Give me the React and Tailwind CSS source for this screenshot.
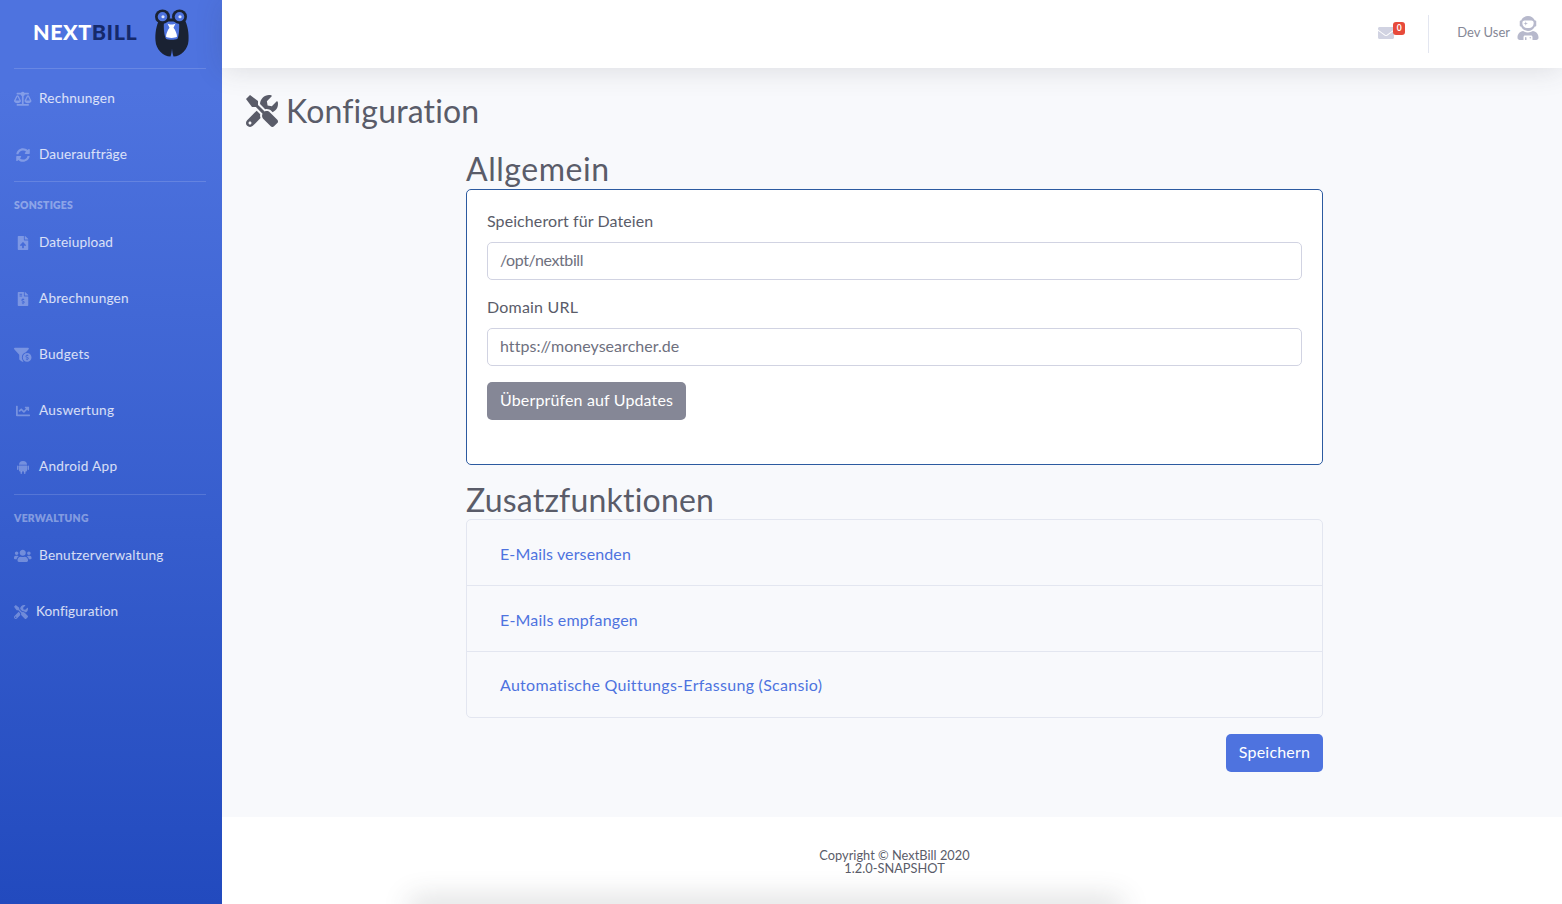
import React from 'react';
import {
  FaBalanceScale,
  FaSyncAlt,
  FaFileUpload,
  FaFileInvoiceDollar,
  FaFunnelDollar,
  FaChartLine,
  FaUsers,
  FaTools,
  FaEnvelope,
  FaUserAstronaut,
} from 'react-icons/fa';

const Logo = () => (
  <svg width="34" height="48" viewBox="0 0 34 50" preserveAspectRatio="none">
    {/* body, two lobes meeting at the bottom */}
    <path d="M5 10 C1 17 0 26 0.500 33 C1 42 8 49 15.500 49.500 C16.500 47 16.800 44 17 41 C17.200 44 17.500 47 18.500 49.500 C26 49 33 42 33.500 33 C34 26 33 17 29 10 Z" fill="#1a2233" />
    {/* belly */}
    <path d="M9 13 L24 13 C24.500 20 24 27 22.500 31 C20 32.500 13 32.500 11 31 C9 27 8.500 20 9 13 Z" fill="#4e73df" />
    {/* money bag */}
    <path d="M12.500 15 C14 16.500 19 16.500 20.500 15 L18.500 19.500 C20.500 22 22 26 22 29 C20.500 30.500 12.500 30.500 11 29 C11 26 12.500 22 14.500 19.500 Z" fill="#ffffff" />
    {/* glasses */}
    <circle cx="7.500" cy="8" r="7.500" fill="#1a2233" />
    <circle cx="24.500" cy="8" r="7.500" fill="#1a2233" />
    <circle cx="7.500" cy="8" r="4.800" fill="#4e73df" />
    <circle cx="24.500" cy="8" r="4.800" fill="#4e73df" />
    <circle cx="8" cy="8" r="1.600" fill="#dfe6fb" />
    <circle cx="25" cy="8" r="1.600" fill="#dfe6fb" />
  </svg>
);

const AndroidIcon = () => (
  <svg width="14" height="14" viewBox="0 0 14 14" fill="currentColor">
    <path d="M3 4.800 a4 3.800 0 0 1 8 0 z" />
    <path d="M3 5.400 h8 v5 a1 1 0 0 1 -1 1 h-6 a1 1 0 0 1 -1 -1 z" />
    <rect x="1" y="5.400" width="1.500" height="4.500" rx="0.750" />
    <rect x="11.500" y="5.400" width="1.500" height="4.500" rx="0.750" />
    <rect x="4.500" y="11" width="1.600" height="3" rx="0.800" />
    <rect x="7.900" y="11" width="1.600" height="3" rx="0.800" />
  </svg>
);

const NavItem = ({
  icon: Icon,
  label,
  iconBox = 'w-[17.5px] mr-[7.5px]',
  iconSize = 'text-[14px]',
  offset = 'pt-[1px]',
  spacing = 'tracking-[0.22px]',
}) => (
  <a className={`flex h-14 items-center pl-[14px] text-[13.6px] text-white/80 ${offset} ${spacing}`}>
    <span className={`flex shrink-0 justify-center text-white/30 ${iconBox} ${iconSize}`}>
      <Icon />
    </span>
    <span>{label}</span>
  </a>
);

const Divider = () => <div className="mx-[14px] h-px w-[192px] bg-white/15" />;

const SectionHeading = ({ children }) => (
  <div className="flex h-8 items-start pl-[14px] pt-4 text-[10.4px] leading-[14px] font-extrabold tracking-[0.25px] uppercase text-white/40">
    {children}
  </div>
);

const Sidebar = () => (
  <aside className="flex w-[222px] shrink-0 flex-col bg-gradient-to-b from-[#4e73df] from-[10%] to-[#224abe]">
    <div className="flex h-[68px] items-start pl-[33px] pt-[9px]">
      <div className="mt-[11px] w-[104px] text-[21.5px] leading-[24px] font-black tracking-[0.55px] whitespace-nowrap">
        <span className="text-white">NEXT</span>
        <span className="text-[#15296b]">BILL</span>
      </div>
      <div className="ml-[18px]">
        <Logo />
      </div>
    </div>
    <Divider />
    <NavItem icon={FaBalanceScale} label="Rechnungen" iconSize="text-[17.5px]" offset="pt-[3px]" />
    <NavItem icon={FaSyncAlt} label="Daueraufträge" offset="pt-[3px]" spacing="tracking-[0.14px]" />
    <Divider />
    <SectionHeading>Sonstiges</SectionHeading>
    <NavItem icon={FaFileUpload} label="Dateiupload" spacing="tracking-[0.13px]" />
    <NavItem icon={FaFileInvoiceDollar} label="Abrechnungen" />
    <NavItem icon={FaFunnelDollar} label="Budgets" iconSize="text-[17.5px]" spacing="tracking-[0.3px]" />
    <NavItem icon={FaChartLine} label="Auswertung" spacing="tracking-[0.3px]" />
    <NavItem icon={AndroidIcon} label="Android App" spacing="tracking-[0.3px]" />
    <Divider />
    <SectionHeading>Verwaltung</SectionHeading>
    <NavItem icon={FaUsers} label="Benutzerverwaltung" iconSize="text-[17.5px]" />
    <NavItem icon={FaTools} label="Konfiguration" iconBox="w-[14px] mr-[8px]" spacing="tracking-[0.07px]" />
  </aside>
);

const Topbar = () => (
  <header className="relative z-10 flex h-[68px] items-center justify-end bg-white pr-[22px] shadow-[0_2px_28px_0_rgba(58,59,69,0.15)]">
    <div className="relative mr-[34px] -mt-[2px] text-[16px] text-[#d1d3e2]">
      <FaEnvelope />
      <span className="absolute -right-[11px] -top-[3px] flex h-[13px] w-[12px] items-center justify-center rounded-[3px] bg-[#e74a3b] text-[8.500px] font-bold text-white">
        0
      </span>
    </div>
    <div className="h-[38px] w-px bg-[#e3e6f0]" />
    <span className="ml-[28px] -mt-[2px] text-[13px] text-[#858796]">Dev User</span>
    <span className="ml-[6px] -mt-[12px] text-[24px] text-[#b7b9cc]">
      <FaUserAstronaut />
    </span>
  </header>
);

const Field = ({ label, value, labelSpacing, valueSpacing }) => (
  <div className="mb-4">
    <label className={`-mt-px mb-[9px] block text-[16px] leading-6 text-[#5a5c69] ${labelSpacing}`}>{label}</label>
    <div className={`flex h-[38px] items-center rounded-[5px] border border-[#d1d3e2] bg-white px-3 pb-[2px] text-[16px] text-[#6e707e] ${valueSpacing}`}>
      {value}
    </div>
  </div>
);

const features = [
  { name: 'E-Mails versenden', row: 'h-[65px] pt-[3px] tracking-[0.12px]' },
  { name: 'E-Mails empfangen', row: 'h-[66px] pt-[2px] tracking-[0.18px] border-t border-[#e3e6f0]' },
  { name: 'Automatische Quittungs-Erfassung (Scansio)', row: 'h-[66px] tracking-[0.28px] border-t border-[#e3e6f0]' },
];

const FeatureList = () => (
  <div className="rounded-[5px] border border-[#e3e6f0]">
    {features.map(({ name, row }) => (
      <div key={name} className={`flex items-center pl-[33px] text-[16px] text-[#4e73df] ${row}`}>
        {name}
      </div>
    ))}
  </div>
);

const Content = () => (
  <main className="flex-1 bg-[#f8f9fc]">
    <div className="flex items-center pl-6 pt-[23px] text-[#5a5c69]">
      <FaTools className="text-[32px]" />
      <h1 className="ml-2 text-[32px] leading-[40px] tracking-[0.15px]">Konfiguration</h1>
    </div>
    <div className="ml-[244px] mt-[18px] w-[857px]">
      <h2 className="text-[32px] leading-[40px] tracking-[0.55px] text-[#5a5c69]">Allgemein</h2>
      <div className="h-[276px] rounded-[5px] border border-[#2c5aa0] bg-white px-5 pt-5">
        <Field label="Speicherort für Dateien" value="/opt/nextbill" labelSpacing="tracking-[0.09px]" valueSpacing="tracking-[-0.4px]" />
        <Field label="Domain URL" value="https://moneysearcher.de" labelSpacing="tracking-[0.2px]" valueSpacing="tracking-[0.04px]" />
        <button className="flex h-[38px] items-center rounded-[5px] bg-[#858796] px-[13px] pb-[2px] text-[16px] tracking-[0.14px] text-white">
          Überprüfen auf Updates
        </button>
      </div>
      <h2 className="mt-[15px] text-[32px] leading-[39px] tracking-[0.2px] text-[#5a5c69]">Zusatzfunktionen</h2>
      <FeatureList />
      <div className="mt-4 flex justify-end">
        <button className="flex h-[38px] w-[97px] items-center justify-center rounded-[5px] bg-[#4e73df] pb-[2px] text-[16px] tracking-[0.2px] text-white">
          Speichern
        </button>
      </div>
    </div>
  </main>
);

const Footer = () => (
  <footer className="relative h-[87px] shrink-0 overflow-hidden bg-white pl-[5px] pt-[32px] text-center text-[12.800px] leading-[13px] tracking-[0.02px] text-[#5a5c69]">
    <div>Copyright © NextBill 2020</div>
    <div>1.2.0-SNAPSHOT</div>
    {/* shadow of whatever sits just below the fold */}
    <div className="absolute bottom-[-10px] left-[194px] h-[10px] w-[700px] shadow-[0_0_28px_6px_rgba(58,59,69,0.18)]" />
  </footer>
);

export default function App() {
  return (
    <div className="flex h-[904px] overflow-hidden font-['Lato','Noto_Sans',sans-serif]">
      <Sidebar />
      <div className="flex min-w-0 flex-1 flex-col">
        <Topbar />
        <Content />
        <Footer />
      </div>
    </div>
  );
}
